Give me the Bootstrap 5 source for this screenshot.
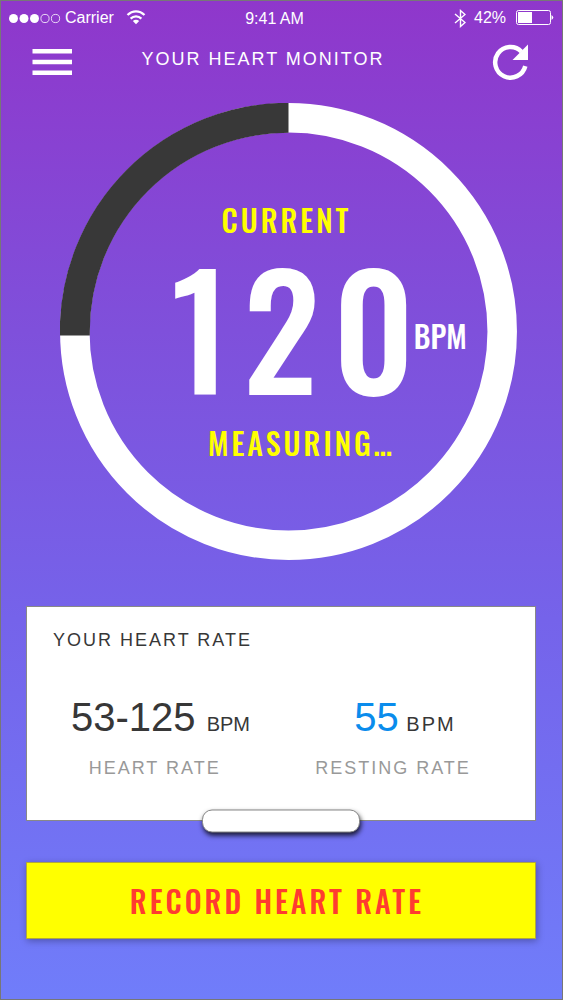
<!DOCTYPE html>
<html lang="en">
<head>
<meta charset="utf-8">
<meta name="viewport" content="width=device-width, initial-scale=1">
<title>Your Heart Monitor</title>
<link href="https://cdn.jsdelivr.net/npm/bootstrap@5.3.0/dist/css/bootstrap.min.css" rel="stylesheet">
<style>
  body {
    font-family: "Liberation Sans", Arial, sans-serif;
    background: #8f38cc;
    color: #fff;
  }
  .screen {
    min-height: 100vh;
    border: 1px solid #777;
    background: linear-gradient(#8f37cb, #7f50db 33%, #7563ea 62%, #707dfa);
  }
  .condensed { font-family: Oswald, "Liberation Sans Narrow", sans-serif; font-weight: 500; }
  .status-bar { height: 34px; font-size: 16px; line-height: 32px; padding: 0 8px; }
  .status-side { flex: 1 1 0; }
  .clock { padding-right: 14px; padding-top: 2px; }
  .battery { margin-left: 10px; }
  .top-bar { height: 54px; padding: 0 34px 0 31px; }
  .caps { font-size: 18px; line-height: 20px; letter-spacing: 2px; }
  .page-title { padding: 0 38px 6px 0; }
  .icon-button { line-height: 0; }
  .gauge-row { padding: 14px 0 0 15px; }
  .gauge { width: 457px; max-width: 100%; }
  .gauge-label { font-size: 30px; line-height: 40px; letter-spacing: 3px; padding-right: 4px; color: #ff0; }
  .gauge-value { font-size: 154px; line-height: 171px; letter-spacing: 13px; padding: 0 0 12px 22px; }
  .gauge-unit { font-size: 30px; line-height: 40px; letter-spacing: 0; top: 76px; margin-left: -14px; }
  .measuring { padding: 0 0 0 26px; }
  .main-area { padding: 0 26px 0 25px; }
  .rate-panel { margin-top: 46px; height: 215px; padding: 23px 26px; border: 1px solid #888; border-radius: 0; color: #373737; }
  .rates { margin-top: 42px; padding: 0 6px 0 10px; }
  .rate-value { font-size: 40px; line-height: 50px; }
  .rate-range { padding-left: 8px; }
  .rate-unit { font-size: 20px; }
  .resting { color: #0a8cec; }
  .muted-label { color: #999; margin-top: 9px; }
  .spaced { letter-spacing: 2px; }
  .drag-handle { width: 158px; height: 23px; margin-top: 1px; border: 1px solid #888; border-radius: 10px; background: #fff; box-shadow: 1px 3px 5px rgba(0,0,0,.8); }
  .record { margin-top: 41px; height: 77px; padding: 0 20px 0 12px; font-size: 30px; letter-spacing: 3px; line-height: 40px; color: #ff3b30; background: #ff0; border: 1px solid #b0a83c; border-radius: 0; box-shadow: 1px 2px 7px rgba(0,0,0,.3); }
  .record:hover { color: #ff3b30; background: #f5f500; }
</style>
</head>
<body>
<div class="screen d-flex flex-column">
  <div class="status-bar d-flex align-items-center">
    <div class="status-side d-flex align-items-center">
      <svg width="52" height="12" viewBox="0 0 52 12" fill="#fff" aria-hidden="true">
        <circle cx="4.5" cy="6.5" r="4.5"/><circle cx="15" cy="6.5" r="4.5"/><circle cx="25.5" cy="6.5" r="4.5"/>
        <g fill="none" stroke="#fff" stroke-width=".8"><circle cx="36" cy="6.5" r="4.1"/><circle cx="46.5" cy="6.5" r="4.1"/></g>
      </svg>
      <span class="ms-1">Carrier</span>
      <svg class="ms-2" width="28" height="16" viewBox="0 0 28 16" fill="none" stroke="#fff" stroke-width="2.2" aria-hidden="true">
        <path d="M5.5 5.1C10.5 0 17.5 0 22.5 5.1"/>
        <path d="M8.6 8.6C11.7 5.5 16.3 5.5 19.4 8.6"/>
        <path d="M14 14.3L10.8 11Q14 8.3 17.2 11Z" fill="#fff" stroke="none"/>
      </svg>
    </div>
    <span class="clock">9:41 AM</span>
    <div class="status-side d-flex align-items-center justify-content-end">
      <svg width="13" height="20" viewBox="0 0 13 20" fill="none" stroke="#fff" stroke-width="1.4" aria-hidden="true"><path d="M2 6L12 14.5 7.5 18.5V2.5L12 6.5 2 15"/></svg>
      <span class="ms-2">42%</span>
      <svg class="battery" width="38" height="16" viewBox="0 0 38 16" fill="none" aria-hidden="true">
        <rect x=".5" y=".5" width="34" height="14" rx="2" stroke="#fff"/>
        <rect x="2" y="2" width="14" height="11" fill="#fff"/>
        <path d="M35.5 5q3.5 2.5 0 5z" fill="#fff"/>
      </svg>
    </div>
  </div>

  <header class="top-bar d-flex align-items-center justify-content-between">
    <button class="icon-button btn p-0 border-0" type="button" aria-label="Menu">
      <svg width="40" height="26" viewBox="0 0 40 26" fill="#fff"><path d="M.5 0h39.5v4.5H.5zM.5 10.7h39.5v4.5H.5zM.5 21.4h39.5v4.5H.5z"/></svg>
    </button>
    <h1 class="caps page-title fw-normal mb-0">YOUR HEART MONITOR</h1>
    <button class="icon-button btn p-0 border-0" type="button" aria-label="Refresh">
      <svg width="36" height="36" viewBox="0 0 36 36"><path d="M33.3 22.1A15.3 15.3 0 1 1 29.5 7.7" fill="none" stroke="#fff" stroke-width="4.5"/><path d="M36 .5V16H20.5Z" fill="#fff"/></svg>
    </button>
  </header>

  <main class="main-area">
    <section class="gauge-row d-flex justify-content-center">
      <div class="gauge position-relative">
        <svg class="d-block w-100" viewBox="0 0 457 457" fill="none" stroke-width="29.5" aria-hidden="true">
          <circle cx="228.5" cy="228.5" r="213.7" stroke="#fff"/>
          <path d="M14.8 232.5V228.5A213.7 213.7 0 0 1 228.5 14.8" stroke="#383838" stroke-width="30"/>
        </svg>
        <div class="position-absolute top-0 start-0 w-100 h-100 d-flex flex-column align-items-center justify-content-center condensed">
          <div class="gauge-label">CURRENT</div>
          <div class="gauge-value position-relative">120<span class="gauge-unit position-absolute start-100">BPM</span></div>
          <div class="gauge-label measuring">MEASURING…</div>
        </div>
      </div>
    </section>

    <section class="rate-panel card">
      <h2 class="caps fw-normal mb-0">YOUR HEART RATE</h2>
      <div class="rates row g-0 text-center">
        <div class="col-5">
          <div class="rate-value rate-range text-nowrap">53-125 <span class="rate-unit">BPM</span></div>
          <div class="caps muted-label">HEART RATE</div>
        </div>
        <div class="col-6 offset-1">
          <div class="rate-value ps-4 text-nowrap"><span class="resting">55</span><span class="rate-unit spaced"> BPM</span></div>
          <div class="caps muted-label">RESTING RATE</div>
        </div>
      </div>
      <div class="drag-handle position-absolute start-50 top-100 translate-middle"></div>
    </section>

    <button class="record btn w-100 condensed" type="button">RECORD HEART RATE</button>
  </main>
</div>
<script src="https://cdn.jsdelivr.net/npm/bootstrap@5.3.0/dist/js/bootstrap.bundle.min.js"></script>
</body>
</html>
